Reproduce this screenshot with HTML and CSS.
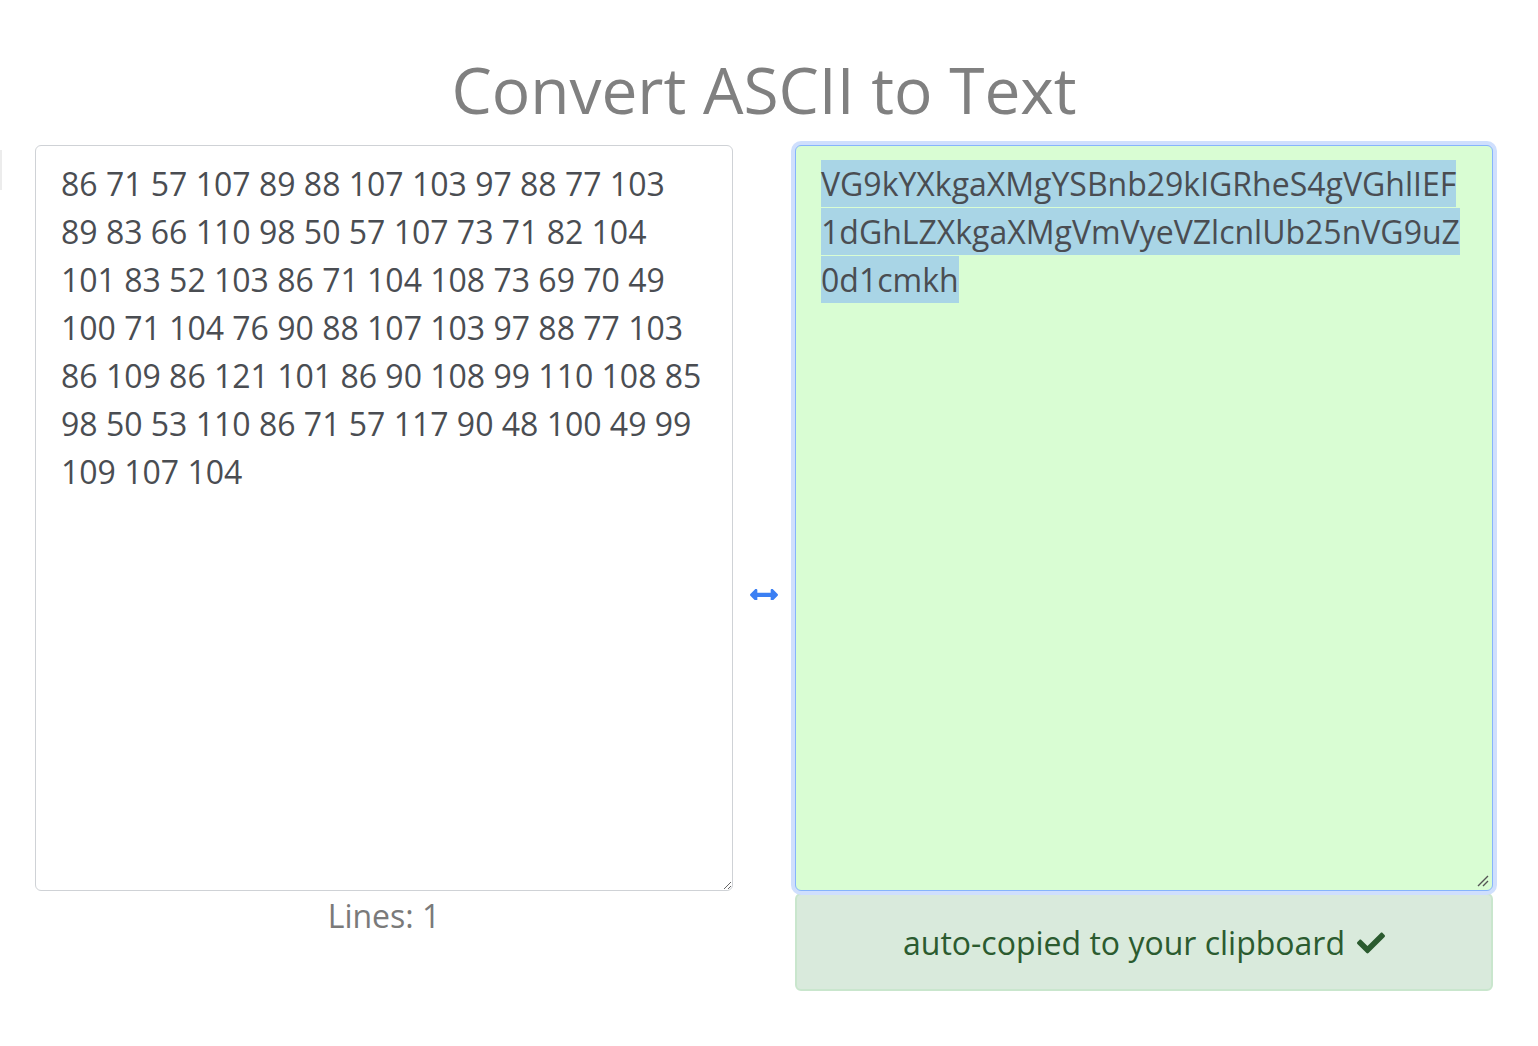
FILE: index.html
```html
<!DOCTYPE html>
<html lang="en">
<head>
<meta charset="utf-8">
<title>Convert ASCII to Text</title>
<link rel="stylesheet" href="styles.css">
</head>
<body>
<div class="edge-mark"></div>
<main class="page">
  <h1 class="title">Convert ASCII to Text</h1>
  <div class="tool">
    <div class="col">
      <textarea class="box input" spellcheck="false">86 71 57 107 89 88 107 103 97 88 77 103 89 83 66 110 98 50 57 107 73 71 82 104 101 83 52 103 86 71 104 108 73 69 70 49 100 71 104 76 90 88 107 103 97 88 77 103 86 109 86 121 101 86 90 108 99 110 108 85 98 50 53 110 86 71 57 117 90 48 100 49 99 109 107 104</textarea>
      <div class="lines">Lines: 1</div>
    </div>
    <div class="mid">
      <svg class="swap" viewBox="0 0 512 200" width="28" height="11" aria-hidden="true"><path fill="#3b7ff3" d="M377.941 69.941V116H134.059V69.941c0-21.382-25.851-32.09-40.971-16.971L7.029 139.029c-9.373 9.373-9.373 24.568 0 33.941l86.059 86.059c15.119 15.119 40.971 4.411 40.971-16.971V196h243.882v46.059c0 21.382 25.851 32.09 40.971 16.971l86.059-86.059c9.373-9.373 9.373-24.568 0-33.941L418.912 52.971c-15.119-15.120-40.971-4.412-40.971 16.970z" transform="translate(0,-50)"/></svg>
    </div>
    <div class="col">
      <div class="box output"><span class="sel">VG9kYXkgaXMgYSBnb29kIGRheS4gVGhlIEF1dGhLZXkgaXMgVmVyeVZlcnlUb25nVG9uZ0d1cmkh</span><svg class="grip" viewBox="0 0 12 12" width="12" height="12" aria-hidden="true"><path d="M1 11 L11 1 M6 11 L11 6" stroke="#555" stroke-width="1.4" fill="none"/></svg></div>
      <div class="copied">auto-copied to your clipboard <svg class="check" viewBox="0 0 512 512" width="28" height="28" aria-hidden="true"><path fill="currentColor" d="M173.898 439.404l-166.4-166.4c-9.997-9.997-9.997-26.206 0-36.204l36.203-36.204c9.997-9.998 26.207-9.998 36.204 0L192 312.69 432.095 72.596c9.997-9.997 26.207-9.997 36.204 0l36.203 36.204c9.997 9.997 9.997 26.206 0 36.204l-294.4 294.401c-9.998 9.997-26.207 9.997-36.204-.001z"/></svg></div>
    </div>
  </div>
</main>
</body>
</html>
```
FILE: styles.css
```css
html, body {
  margin: 0;
  padding: 0;
  background: #fff;
}
body {
  font-family: "Open Sans", "DejaVu Sans", sans-serif;
  color: #4a4d52;
}
.edge-mark {
  position: absolute;
  left: 0;
  top: 150px;
  width: 2px;
  height: 40px;
  background: #ececec;
}
.page {
  padding: 46px 45px 40px 35px;
}
.title {
  margin: 0 0 12px;
  font-size: 64px;
  font-weight: 400;
  line-height: 87px;
  color: #808080;
  text-align: center;
}
.tool {
  display: grid;
  grid-template-columns: 698px 62px 698px;
}
.col {
  display: flex;
  flex-direction: column;
}
.box {
  box-sizing: border-box;
  width: 698px;
  height: 746px;
  margin: 0;
  padding: 14px 30px 14px 25px;
  font-family: "Open Sans", "DejaVu Sans", sans-serif;
  font-size: 32px;
  line-height: 48px;
  color: #4a4d52;
  border-radius: 6px;
  overflow-wrap: break-word;
  word-break: normal;
}
.input {
  display: block;
  border: 1px solid #cfd2d6;
  background: #fff;
  resize: vertical;
  outline: none;
  overflow: hidden;
}
.output {
  position: relative;
  border: 1px solid #86b4fc;
  background: #d9fdd3;
  box-shadow: 0 0 0 4px #cfdffd;
  overflow: hidden;
  word-break: break-all;
}
.sel {
  background: #a9d5e6;
  padding: 2px 0;
  -webkit-box-decoration-break: clone;
  box-decoration-break: clone;
}
.grip {
  position: absolute;
  right: 3px;
  bottom: 3px;
}
.mid {
  display: flex;
  justify-content: center;
  align-items: flex-start;
}
.swap {
  display: block;
  margin-top: 444px;
}
.lines {
  font-size: 32px;
  line-height: 50px;
  color: #7a7a7a;
  text-align: center;
}
.copied {
  box-sizing: border-box;
  margin-top: 2px;
  height: 98px;
  border: 2px solid #c9e6cd;
  border-radius: 6px;
  background: #d9eadc;
  color: #2b5b2f;
  font-size: 32px;
  display: flex;
  align-items: center;
  justify-content: center;
  gap: 12px;
}
.check {
  display: block;
  width: 28px;
  height: 28px;
  margin-top: 2px;
}
```
